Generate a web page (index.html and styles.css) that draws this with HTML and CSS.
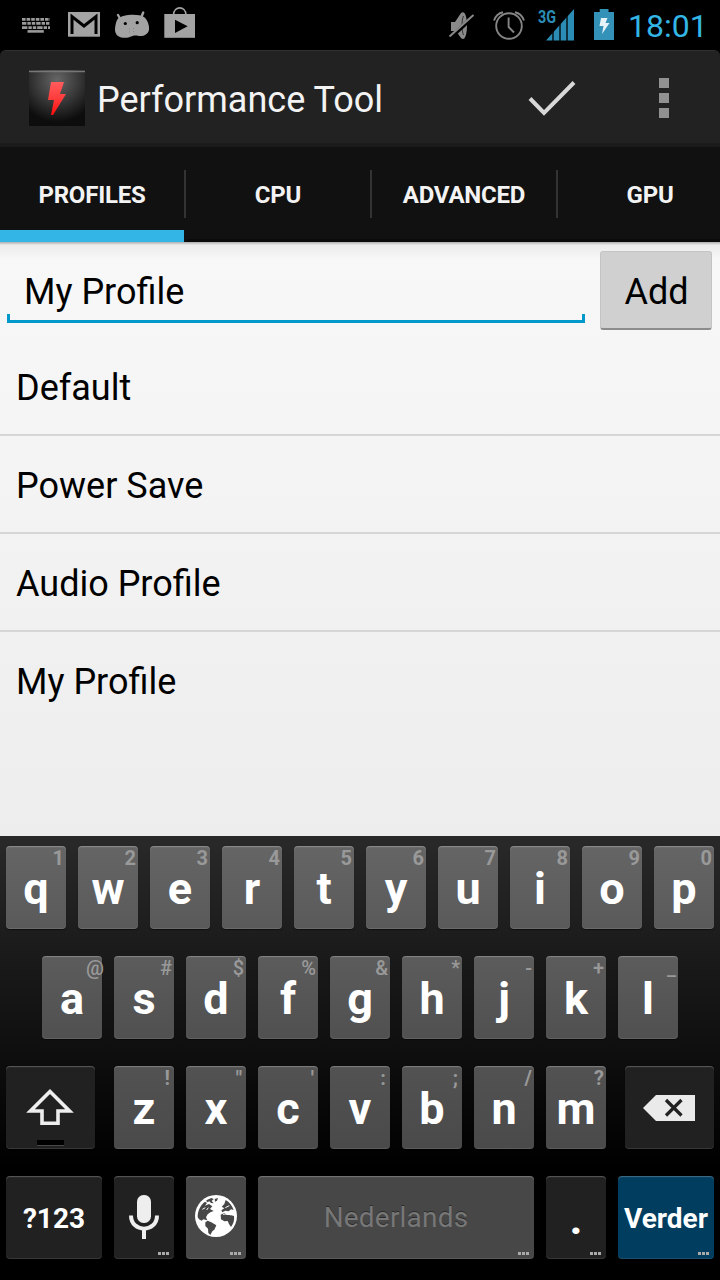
FILE: index.html
```html
<!DOCTYPE html>
<html lang="en">
<head>
  <meta charset="UTF-8">
  <meta name="viewport" content="width=device-width, initial-scale=1.0">
  <title>Performance Tool</title>
  <link rel="stylesheet" href="styles.css">
</head>
<body>

<div class="screen">
  <div class="statusbar">
    <div class="notifications">
      <svg width="36" height="50" viewBox="18 0 36 50">
        <g fill="none" stroke="#9a9a9a" stroke-width="2.6">
          <path d="M22 19.4H50" stroke-dasharray="3.6 1"/>
          <path d="M22 23.4H50" stroke-dasharray="4.4 1 3.4 1 3.4 1"/>
          <path d="M22 27.6H50" stroke-dasharray="5.4 1 3.4 1 3.4 1"/>
          <path d="M27.5 31.4H43.8"/>
        </g>
      </svg>
      <svg width="36" height="50" viewBox="66 0 36 50">
        <rect x="68" y="12" width="32" height="24.7" fill="#a3a3a3"/>
        <path d="M72 34V16.5L84 26L96 16.5V34" fill="none" stroke="#000" stroke-width="3"/>
      </svg>
      <svg width="36" height="50" viewBox="114 0 36 50">
        <path d="M118 15L121 20M143.2 12.5L141 18" stroke="#a3a3a3" stroke-width="2.4" stroke-linecap="round"/>
        <path d="M118 18.500C123 14 139 13.500 144 17C148 20 149.500 26 149 30C147.500 35.500 142 37 137 35.500C132 35 131 37.500 125 37.800C119 38 115 35 115 29.500C115 26 116 21 118 18.500Z" fill="#a3a3a3"/>
        <circle cx="125.300" cy="23.500" r="1.600"/>
        <circle cx="137.200" cy="22.700" r="1.600"/>
        <path d="M129.500 28.500v1M133.500 28v1M129.500 31.500v1M133.500 31v1" stroke="#858585"/>
      </svg>
      <svg width="36" height="50" viewBox="162 0 36 50">
        <path d="M173.500 15C174 5.500 185.500 5.500 186 15" fill="none" stroke="#a3a3a3" stroke-width="1.600"/>
        <rect x="164.300" y="14" width="30.700" height="23.800" fill="#a3a3a3"/>
        <path d="M175 19.700L187.700 26.300L175 33Z"/>
      </svg>
    </div>
    <div class="system">
      <svg width="36" height="50" viewBox="444 0 36 50">
        <path d="M451 22H455L461 13C465 10 467 17 467 25.500C467 34 465 42 461 38L456 31H451Z" fill="#8a8a8a"/>
        <path d="M463.500 16C461.500 20 461.500 31 463.500 35" fill="none" stroke="#333" stroke-width="1"/>
        <path d="M450 38L474 16" stroke="#000" stroke-width="4"/>
        <path d="M449.500 36.500L473.500 15" stroke="#8a8a8a" stroke-width="2"/>
      </svg>
      <svg width="36" height="50" viewBox="492 0 36 50">
        <g fill="none" stroke="#858585" stroke-width="1.900">
          <circle cx="509" cy="26" r="12.800"/>
          <path d="M508.600 17.500V27L514 32.500M494 20.500C495.500 16 499 13 503 12.200M524 20.500C522.500 16 519 13 515 12.200"/>
        </g>
      </svg>
      <div class="signal">
        <span class="network">3G</span>
        <svg width="36" height="50" viewBox="540 0 36 50">
          <path d="M546 40.600L574 9V40.600Z" fill="#2b8db5"/>
          <path d="M553 30V41M560 24V41M567 16V41" stroke="#000" stroke-width="1.300"/>
        </svg>
      </div>
      <svg width="36" height="50" viewBox="588 0 36 50">
        <path d="M594 12H599.700V9H608.500V12H614V40H594Z" fill="#3492b9"/>
        <path d="M601 18H607.500L605.500 23H609.500L602 34L603.500 26H599.500Z" fill="#e6f4f8"/>
      </svg>
      <span class="clock">18:01</span>
    </div>
  </div>

  <div class="actionbar">
    <svg class="app-icon" width="56" height="56" viewBox="0 0 56 56">
      <defs>
        <radialGradient id="tile" cx="50%" cy="18%" r="75%">
          <stop offset="0" stop-color="#666"/>
          <stop offset="0.550" stop-color="#363636"/>
          <stop offset="1" stop-color="#0d0d0d"/>
        </radialGradient>
        <linearGradient id="bolt" x1="0" y1="0" x2="0" y2="1">
          <stop offset="0" stop-color="#ff5c5c"/>
          <stop offset="0.500" stop-color="#ff3c3c"/>
          <stop offset="1" stop-color="#ff0d0d"/>
        </linearGradient>
      </defs>
      <rect width="56" height="56" rx="1" fill="url(#tile)"/>
      <path d="M0 1.500H56" stroke="#777" stroke-width="1.500"/>
      <path d="M22 12H35L31 24H37L24 45H22L25 30H19Z" fill="url(#bolt)"/>
    </svg>
    <h1 class="title">Performance Tool</h1>
    <svg class="check" width="48" height="36" viewBox="0 0 48 36">
      <path d="M2 17.500L16 32L46 1.500" fill="none" stroke="#d8d8d8" stroke-width="4"/>
    </svg>
    <div class="overflow"><i></i><i></i><i></i></div>
  </div>

  <div class="tabs">
    <div class="tab active">PROFILES</div>
    <div class="tab">CPU</div>
    <div class="tab">ADVANCED</div>
    <div class="tab">GPU</div>
  </div>

  <div class="content">
    <div class="add-row">
      <div class="field"><input type="text" value="My Profile"></div>
      <button class="add">Add</button>
    </div>
    <ul class="profiles">
      <li>Default</li>
      <li>Power Save</li>
      <li>Audio Profile</li>
      <li>My Profile</li>
    </ul>
  </div>

  <div class="keyboard">
    <div class="row row1">
      <div class="key">q<span class="hint">1</span></div>
      <div class="key">w<span class="hint">2</span></div>
      <div class="key">e<span class="hint">3</span></div>
      <div class="key">r<span class="hint">4</span></div>
      <div class="key">t<span class="hint">5</span></div>
      <div class="key">y<span class="hint">6</span></div>
      <div class="key">u<span class="hint">7</span></div>
      <div class="key">i<span class="hint">8</span></div>
      <div class="key">o<span class="hint">9</span></div>
      <div class="key">p<span class="hint">0</span></div>
    </div>
    <div class="row row2">
      <div class="key">a<span class="hint at">@</span></div>
      <div class="key">s<span class="hint">#</span></div>
      <div class="key">d<span class="hint">$</span></div>
      <div class="key">f<span class="hint">%</span></div>
      <div class="key">g<span class="hint">&amp;</span></div>
      <div class="key">h<span class="hint">*</span></div>
      <div class="key">j<span class="hint">-</span></div>
      <div class="key">k<span class="hint">+</span></div>
      <div class="key">l<span class="hint">_</span></div>
    </div>
    <div class="row row3">
      <div class="key dark wide">
        <svg width="89" height="83" viewBox="0 0 89 83">
          <path d="M44 25.500L24.500 45H36V57.300H52V45H63.500Z" fill="none" stroke="#eee" stroke-width="3.600"/>
          <path d="M31 76.500H58" stroke="#000" stroke-width="5"/>
          <path d="M31 79.500H58" stroke="#484848" stroke-width="1"/>
        </svg>
      </div>
      <div class="letters">
        <div class="key">z<span class="hint thin">!</span></div>
        <div class="key">x<span class="hint thin">"</span></div>
        <div class="key">c<span class="hint thin">'</span></div>
        <div class="key">v<span class="hint thin">:</span></div>
        <div class="key">b<span class="hint thin">;</span></div>
        <div class="key">n<span class="hint">/</span></div>
        <div class="key">m<span class="hint">?</span></div>
      </div>
      <div class="key dark wide">
        <svg width="89" height="83" viewBox="0 0 89 83">
          <path d="M18 42L31 29H70V55H31Z" fill="#eaeaea"/>
          <path d="M41 34L56.500 49.500M56.500 34L41 49.500" stroke="#222" stroke-width="3.200"/>
        </svg>
      </div>
    </div>
    <div class="row row4">
      <div class="key dark label">?123</div>
      <div class="key dark">
        <svg width="60" height="83" viewBox="0 0 60 83">
          <rect x="23" y="19" width="14" height="28" rx="6.500" fill="#eee"/>
          <path d="M17 39.500C17 57 43 57 43 39.500M30 53V63" fill="none" stroke="#eee" stroke-width="4"/>
        </svg>
        <span class="more"><i></i><i></i><i></i></span>
      </div>
      <div class="key">
        <svg class="globe" width="42" height="42" viewBox="0 0 126 126">
          <circle cx="63" cy="63" r="63" fill="#fff"/>
          <g fill="#474747">
            <path d="M8 66C8 46 17 30 30 20L36 24L30 32L42 27L52 34L45 42L56 48L46 52L38 58L33 67L37 76L25 73L20 77L12 73Z"/>
            <path d="M34 16L49 9L56 12L50 18L56 25L48 24L43 19L36 22ZM59 12L69 9L66 17L60 20Z"/>
            <path d="M31 82L38 77L49 82L64 91L58 104L52 109L46 120L40 114L39 101L31 93Z"/>
            <path d="M92 15C103 21 112 33 116 45L108 43L101 49L91 47L82 52L79 46L88 40L80 35L88 27Z"/>
            <path d="M77 59L88 54L96 60L106 60L117 63C119 75 115 87 108 96L102 87L98 78L88 79L78 73Z"/>
          </g>
          <path d="M84 58L110 55M91 38L103 32M22 43L31 38M99 52L106 61M40 38L35 45" stroke="#fff" stroke-width="3"/>
        </svg>
        <span class="more"><i></i><i></i><i></i></span>
      </div>
      <div class="key space">Nederlands<span class="more"><i></i><i></i><i></i></span></div>
      <div class="key dark">.<span class="more"><i></i><i></i><i></i></span></div>
      <div class="key label enter">Verder<span class="more"><i></i><i></i><i></i></span></div>
    </div>
  </div>
</div>

</body>
</html>
```

FILE: styles.css
```css
* {
  box-sizing: border-box;
}
body {
  margin: 0;
  background: #000;
  font-family: Roboto, sans-serif;
}
svg {
  display: block;
  flex: none;
}
.screen {
  width: 720px;
  height: 1280px;
  overflow: hidden;
}

/* status bar */
.statusbar {
  display: flex;
  justify-content: space-between;
  height: 50px;
  padding-left: 18px;
}
.notifications, .system {
  display: flex;
  gap: 12px;
}
.signal {
  position: relative;
}
.network {
  position: absolute;
  left: -2px;
  top: 6px;
  font-size: 18px;
  line-height: 21px;
  font-weight: bold;
  color: #2b8db5;
  transform: scaleX(0.8);
  transform-origin: left;
}
.clock {
  width: 96px;
  margin-left: -12px;
  padding-left: 4px;
  font-size: 32px;
  line-height: 52px;
  color: #33b5e5;
}

/* action bar */
.actionbar {
  display: flex;
  align-items: center;
  height: 97px;
  padding: 0 51px 0 29px;
  background: #222;
  border-top: 1px solid #303030;
  border-bottom: 4px solid #1b1b1b;
  border-radius: 6px 6px 0 0;
}
.app-icon {
  margin-top: 2px;
}
.title {
  flex: 1;
  margin: 5px 0 0 12px;
  font-size: 36px;
  font-weight: normal;
  color: #f3f3f3;
}
.check {
  margin: 3px 83px 0 0;
}
.overflow {
  display: flex;
  flex-direction: column;
  gap: 5px;
  margin-top: 2px;
}
.overflow i {
  width: 10px;
  height: 10px;
  background: #919191;
}

/* tabs */
.tabs {
  display: flex;
  height: 95px;
  background: #111;
}
.tab {
  flex: none;
  width: 186px;
  padding-right: 2px;
  line-height: 97px;
  letter-spacing: -0.2px;
  text-align: center;
  font-size: 24px;
  font-weight: bold;
  color: #f3f3f3;
  background: linear-gradient(#333, #333) right 23px / 2px 48px no-repeat;
  border-bottom: 3px solid #0b0b0b;
}
.tab.active {
  border-bottom: 0;
  background: linear-gradient(#333, #333) 184px 23px / 2px 48px no-repeat, linear-gradient(#33b5e5, #33b5e5) 0 83px / 184px 12px no-repeat;
}

/* profile list */
.content {
  height: 594px;
  background: linear-gradient(rgba(0, 0, 0, 0.3), rgba(0, 0, 0, 0.05) 3px, rgba(0, 0, 0, 0) 18px), linear-gradient(#f8f8f8, #ededed);
}
.add-row {
  display: flex;
  height: 96px;
  padding: 9px 8px 8px 7px;
  gap: 15px;
}
.field {
  width: 578px;
  height: 72px;
  border-bottom: 3px solid #0099cc;
  background: linear-gradient(#0099cc, #0099cc) left bottom / 3px 6px no-repeat, linear-gradient(#0099cc, #0099cc) right bottom / 3px 6px no-repeat;
}
.field input {
  width: 100%;
  height: 69px;
  padding: 12px 17px 0;
  border: 0;
  outline: 0;
  background: none;
  font: 36px Roboto, sans-serif;
  color: #000;
}
.add {
  width: 112px;
  height: 79px;
  padding: 3px 0 0 1px;
  border: 1px solid #c4c4c4;
  border-bottom: 2px solid #8c8c8c;
  border-radius: 3px;
  background: #d0d0d0;
  font: 36px Roboto, sans-serif;
  color: #000;
}
.profiles {
  margin: 0;
  padding: 0;
  list-style: none;
}
.profiles li {
  height: 98px;
  padding-left: 16px;
  border-bottom: 2px solid #d6d6d6;
  font-size: 36px;
  line-height: 101px;
  color: #000;
}
.profiles li:last-child {
  border: 0;
}

/* keyboard */
.keyboard {
  display: flex;
  flex-direction: column;
  gap: 27px;
  height: 444px;
  padding: 10px 6px;
  background: linear-gradient(#292929, #000 75%);
}
.row, .letters {
  display: flex;
  gap: 12px;
}
.row2 {
  padding-left: 36px;
}
.row3 {
  justify-content: space-between;
  gap: 0;
}
.key {
  position: relative;
  display: flex;
  align-items: center;
  justify-content: center;
  width: 60px;
  height: 83px;
  padding-top: 1px;
  border-radius: 4px;
  background: linear-gradient(#656565, #5a5a5a);
  box-shadow: inset 0 1px 0 rgba(255, 255, 255, 0.2), inset 0 2px 0 rgba(255, 255, 255, 0.04), inset 0 -1px 0 rgba(255, 255, 255, 0.1), 0 1px 1px rgba(0, 0, 0, 0.5);
  font-size: 45px;
  font-weight: bold;
  color: #fff;
}
.row2 .key {
  background: linear-gradient(#5c5c5c, #505050);
}
.row3 .key {
  background: linear-gradient(#525252, #4a4a4a);
}
.row4 .key {
  background: #474747;
}
.row .key.dark {
  background: #212121;
}
.row .key.enter {
  background: #003d5e;
}
.key svg {
  margin-top: -1px;
}
.key .globe {
  margin-top: -4px;
}
.wide {
  width: 89px;
}
.label {
  width: 96px;
  font-size: 28px;
}
.row4 .space {
  width: 276px;
  padding-top: 0;
  font-size: 28px;
  font-weight: normal;
  letter-spacing: 0.2px;
  color: #777;
  text-shadow: 0 -1px 0 #2b2b2b;
}
.hint {
  position: absolute;
  top: 1px;
  right: 2px;
  font-size: 20px;
  line-height: 23px;
  color: #999;
}
.row2 .hint {
  font-weight: 500;
}
.row2 .at {
  right: -2px;
}
.thin {
  right: 4px;
}
.more {
  position: absolute;
  right: 5px;
  bottom: 4px;
  display: flex;
  gap: 1px;
}
.more i {
  width: 3px;
  height: 3px;
  background: #aaa;
}
```
